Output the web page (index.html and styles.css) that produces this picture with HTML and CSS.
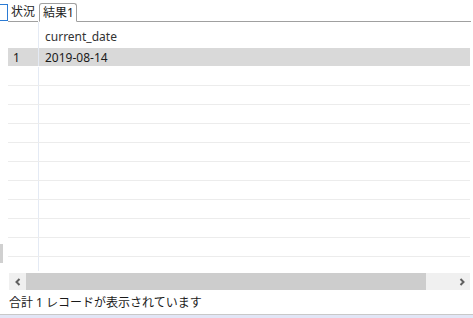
FILE: index.html
```html
<!DOCTYPE html>
<html lang="ja">
<head>
  <meta charset="UTF-8" />
  <title>結果1</title>
  <link rel="stylesheet" href="styles.css">
</head>
<body>
  <div class="tabs">
    <div class="tab-edge"></div>
    <div class="tab">状況</div>
    <div class="tab active">結果1</div>
    <div class="tab-fill"></div>
  </div>

  <div class="results">
    <div class="side-mark"></div>
    <div class="grid">
      <div class="row head"><div class="num"></div><div class="cell">current_date</div></div>
      <div class="row selected"><div class="num">1</div><div class="cell">2019-08-14</div></div>
      <div class="row"><div class="num"></div><div class="cell"></div></div>
      <div class="row"><div class="num"></div><div class="cell"></div></div>
      <div class="row"><div class="num"></div><div class="cell"></div></div>
      <div class="row"><div class="num"></div><div class="cell"></div></div>
      <div class="row"><div class="num"></div><div class="cell"></div></div>
      <div class="row"><div class="num"></div><div class="cell"></div></div>
      <div class="row"><div class="num"></div><div class="cell"></div></div>
      <div class="row"><div class="num"></div><div class="cell"></div></div>
      <div class="row"><div class="num"></div><div class="cell"></div></div>
      <div class="row"><div class="num"></div><div class="cell"></div></div>
      <div class="row"><div class="num"></div><div class="cell"></div></div>
    </div>
  </div>

  <div class="hscroll">
    <div class="arrow">
      <svg width="8" height="8" viewBox="0 0 8 8"><path d="M5.5 1 L2.5 4 L5.5 7" fill="none" stroke="#606060" stroke-width="2"/></svg>
    </div>
    <div class="thumb"></div>
    <div class="track"></div>
    <div class="arrow">
      <svg width="8" height="8" viewBox="0 0 8 8"><path d="M2.5 1 L5.5 4 L2.5 7" fill="none" stroke="#606060" stroke-width="2"/></svg>
    </div>
  </div>

  <div class="status">合計 1 レコードが表示されています</div>
  <div class="bottom-strip"></div>
</body>
</html>
```

FILE: styles.css
```css
html, body {
  margin: 0;
  padding: 0;
  background: #fff;
}

body {
  width: 473px;
  height: 318px;
  overflow: hidden;
  display: flex;
  flex-direction: column;
  font-family: "Segoe UI", "Noto Sans", "Noto Sans CJK JP", sans-serif;
  font-size: 12px;
  color: #1a1a1a;
}

/* tab strip */
.tabs {
  display: flex;
  align-items: flex-end;
  height: 22px;
  flex-shrink: 0;
}

.tab-edge {
  width: 8px;
  height: 17px;
  margin-bottom: 1px;
  border: 1px solid #2b7bd4;
  border-left: none;
  box-sizing: border-box;
}

.tab {
  height: 19px;
  line-height: 18px;
  padding: 0 3px;
  border-bottom: 1px solid #a0a0a0;
  box-sizing: border-box;
  color: #222;
}

.tab.active {
  height: 19px;
  border: 1px solid #a0a0a0;
  border-bottom: 1px solid #fff;
  border-radius: 3px 3px 0 0;
  padding: 0 2px 0 3px;
  margin-left: 1px;
}

.tab-fill {
  flex: 1;
  margin-right: 2px;
  border-bottom: 1px solid #a0a0a0;
}

/* result grid */
.results {
  position: relative;
  height: 249px;
  flex-shrink: 0;
  overflow: hidden;
}

.side-mark {
  position: absolute;
  left: 0;
  top: 222px;
  width: 3px;
  height: 19px;
  background: #d0d0d0;
}

.grid {
  margin: 0 3px 0 8px;
}

.row {
  display: flex;
  height: 19px;
  border-bottom: 1px solid #ececec;
  box-sizing: border-box;
}

.row.head {
  height: 26px;
  border-bottom: none;
}

.row.head .cell {
  padding-top: 5px;
  line-height: 19px;
  color: #333;
}

.row.selected {
  background: #d9d9d9;
  border-bottom: 1px solid #fff;
}

.num {
  width: 31px;
  padding-left: 5px;
  box-sizing: border-box;
  border-right: 1px solid #e4eaf4;
  line-height: 19px;
}

.cell {
  flex: 1;
  padding-left: 6px;
  line-height: 19px;
}

/* horizontal scrollbar */
.hscroll {
  display: flex;
  height: 17px;
  margin: 2px 3px 0 9px;
  background: #f0f0f0;
  flex-shrink: 0;
}

.arrow {
  width: 17px;
  display: flex;
  align-items: center;
  justify-content: center;
}

.thumb {
  width: 400px;
  background: #cdcdcd;
}

.track {
  flex: 1;
}

/* status bar */
.status {
  height: 24px;
  line-height: 25px;
  padding-left: 9px;
  color: #1a1a1a;
  flex-shrink: 0;
}

.bottom-strip {
  flex: 1;
  border-top: 1px solid #c8c8c8;
  background: #e2e6f6;
}
```
